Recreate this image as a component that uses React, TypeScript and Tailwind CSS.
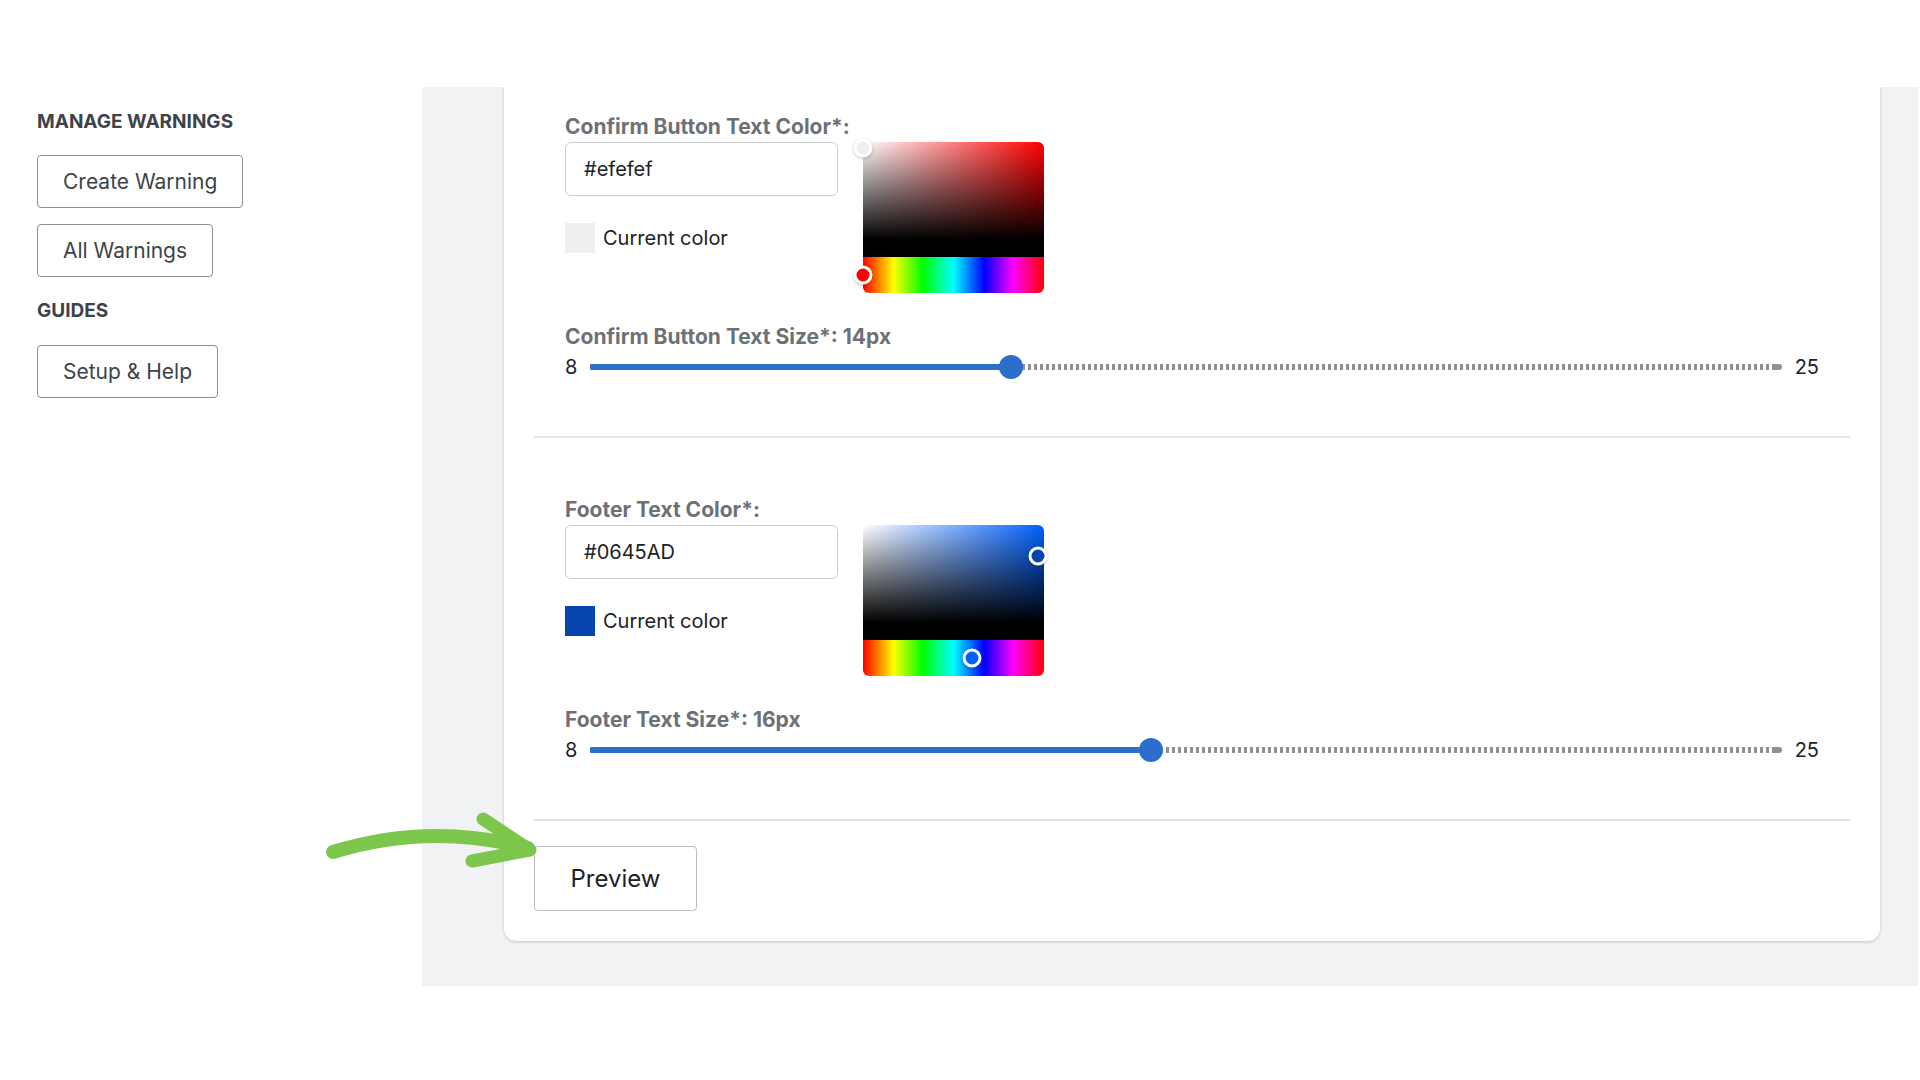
import React from "react";

type Field = {
  colorLabel: string;
  color: string;
  sizeLabel: string;
  size: number;
};

const fields: Field[] = [
  { colorLabel: "Confirm Button Text Color*:", color: "#efefef", sizeLabel: "Confirm Button Text Size*", size: 14 },
  { colorLabel: "Footer Text Color*:", color: "#0645AD", sizeLabel: "Footer Text Size*", size: 16 },
];

const MIN = 8;
const MAX = 25;

// hex -> hsv, so the picker handles sit where the colour is
function hexToHsv(hex: string) {
  const n = hex.replace("#", "");
  const r = parseInt(n.slice(0, 2), 16) / 255;
  const g = parseInt(n.slice(2, 4), 16) / 255;
  const b = parseInt(n.slice(4, 6), 16) / 255;
  const max = Math.max(r, g, b);
  const min = Math.min(r, g, b);
  const d = max - min;
  let h = 0;
  if (d !== 0) {
    if (max === r) h = ((g - b) / d) % 6;
    else if (max === g) h = (b - r) / d + 2;
    else h = (r - g) / d + 4;
    h *= 60;
    if (h < 0) h += 360;
  }
  return { h, s: max === 0 ? 0 : d / max, v: max };
}

function ColorPicker({ color }: { color: string }) {
  const { h, s, v } = hexToHsv(color);
  return (
    <div className="relative w-[181px] h-[151px] shrink-0">
      <div
        className="relative h-[115px] rounded-t-[6px]"
        style={{
          background: `linear-gradient(to top, #000 15%, rgba(0,0,0,0)), linear-gradient(to right, #fff, hsl(${h}, 100%, 50%))`,
        }}
      >
        <span
          className="absolute w-[19px] h-[19px] rounded-full border-[3px] border-white shadow-[0_1px_3px_rgba(0,0,0,0.25)] -translate-x-1/2 -translate-y-1/2"
          style={{ left: `${s * 100}%`, top: `${Math.max((1 - v) * 84, 3.5)}%`, background: color }}
        />
      </div>
      <div className="relative h-[36px] rounded-b-[6px] bg-[linear-gradient(to_right,#f00_0%,#ff0_17%,#0f0_33%,#0ff_50%,#00f_67%,#f0f_83%,#f00_100%)]">
        <span
          className="absolute top-1/2 w-[19px] h-[19px] rounded-full border-[3px] border-white shadow-[0_1px_3px_rgba(0,0,0,0.25)] -translate-x-1/2 -translate-y-1/2"
          style={{ left: `${(h / 360) * 100}%`, background: `hsl(${h}, 100%, 50%)` }}
        />
      </div>
    </div>
  );
}

function SizeSlider({ value }: { value: number }) {
  const pct = ((value - MIN) / (MAX - MIN)) * 100;
  return (
    <div className="flex items-center h-[24px] text-[20px] text-[#202223]">
      <span className="w-[25px] leading-none">{MIN}</span>
      <div className="relative flex-1 h-[24px] flex items-center">
        <div className="absolute left-0 right-[6px] h-[6px] bg-[repeating-linear-gradient(90deg,#8c9196_0px,#8c9196_3px,transparent_3px,transparent_6px)]" />
        <div className="absolute right-0 w-[10px] h-[6px] rounded-r-full bg-[#8c9196]" />
        <div className="absolute left-0 h-[6px] rounded-full bg-[#2c6ecb]" style={{ width: `${pct}%` }} />
        <div
          className="absolute w-[24px] h-[24px] rounded-full bg-[#2c6ecb] -translate-x-1/2"
          style={{ left: `${pct}%` }}
        />
      </div>
      <span className="ml-[13px] leading-none">{MAX}</span>
    </div>
  );
}

function FieldSection({ field }: { field: Field }) {
  return (
    <div className="px-[31px] pt-[60px] pb-[57px] border-b-2 border-[#e4e5e7]">
      <div className="h-[24px] leading-[24px] text-[21px] font-bold text-[#6d7175]">{field.colorLabel}</div>
      <div className="mt-[3px] flex items-start gap-[25px]">
        <div className="w-[273px]">
          <div className="h-[54px] flex items-center pl-[18px] border border-[#c9cccf] rounded-[6px] text-[20px] text-[#202223]">
            {field.color}
          </div>
          <div className="mt-[27px] flex items-center gap-[8px] h-[30px]">
            <span className="w-[30px] h-[30px]" style={{ background: field.color }} />
            <span className="text-[20px] text-[#202223]">Current color</span>
          </div>
        </div>
        <ColorPicker color={field.color} />
      </div>
      <div className="mt-[32px] h-[24px] leading-[24px] text-[21px] font-bold text-[#6d7175]">
        {field.sizeLabel}: {field.size}px
      </div>
      <div className="mt-[6px]">
        <SizeSlider value={field.size} />
      </div>
    </div>
  );
}

function SideButton({ label }: { label: string }) {
  return (
    <button className="h-[53px] px-[25px] border border-[#8c8f94] rounded-[4px] text-[21px] text-[#3c434a] bg-white">
      {label}
    </button>
  );
}

export default function App() {
  return (
    <div className="relative w-[1920px] h-[1080px] bg-white flex overflow-hidden font-['Inter',sans-serif]">
      {/* Sidebar */}
      <aside className="w-[422px] shrink-0 pl-[37px] pt-[111px] flex flex-col items-start">
        <h2 className="h-[22px] leading-[22px] text-[19px] font-bold text-[#3c434a] uppercase">Manage Warnings</h2>
        <div className="mt-[22px]">
          <SideButton label="Create Warning" />
        </div>
        <div className="mt-[16px]">
          <SideButton label="All Warnings" />
        </div>
        <h2 className="mt-[23px] h-[22px] leading-[22px] text-[19px] font-bold text-[#3c434a] uppercase">Guides</h2>
        <div className="mt-[23px]">
          <SideButton label="Setup & Help" />
        </div>
      </aside>

      {/* Settings panel */}
      <main className="w-[1496px] h-[899px] mt-[87px] bg-[#f1f2f3] overflow-hidden">
        <div className="ml-[82px] w-[1376px] -mt-[32px] bg-white rounded-[12px] shadow-[0_1px_3px_rgba(0,0,0,0.2)] px-[30px] pb-[30px]">
          {fields.map((f) => (
            <FieldSection key={f.colorLabel} field={f} />
          ))}
          <div className="pt-[25px]">
            <button className="w-[163px] h-[65px] border border-[#babfc3] rounded-[4px] text-[24px] text-[#202223] bg-white">
              Preview
            </button>
          </div>
        </div>
      </main>

      {/* green arrow pointing at Preview */}
      <svg className="absolute left-[320px] top-[810px]" width="220" height="60" viewBox="0 0 220 60" fill="none">
        <path d="M13 42 Q110 12 208 38" stroke="#7bc64b" strokeWidth="14" strokeLinecap="round" />
        <path d="M163 9 L210 40 L152 51" stroke="#7bc64b" strokeWidth="13" strokeLinecap="round" strokeLinejoin="round" />
      </svg>
    </div>
  );
}
